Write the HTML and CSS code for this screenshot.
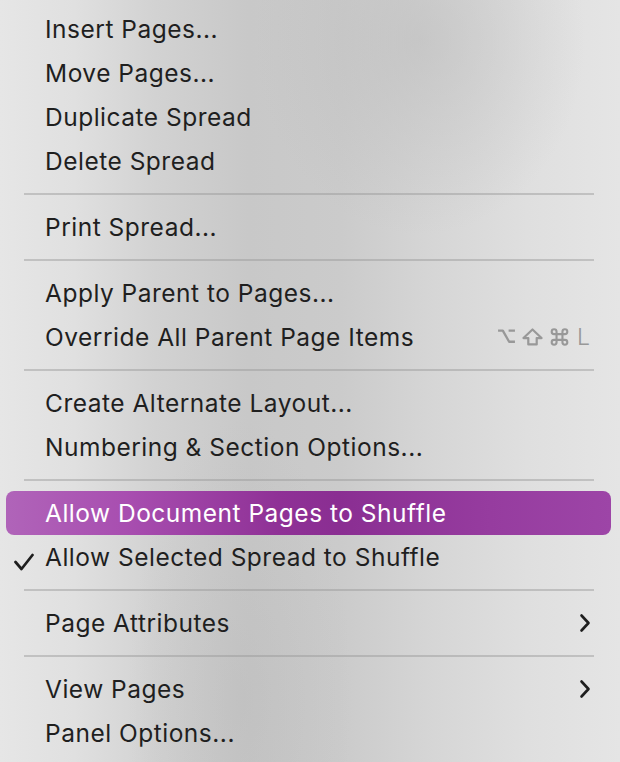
FILE: index.html
```html
<!DOCTYPE html>
<html>
<head>
<meta charset="utf-8">
<link rel="stylesheet" href="styles.css">
</head>
<body>
<div class="menu">
  <div class="item"><span class="label">Insert Pages...</span></div>
  <div class="item"><span class="label">Move Pages...</span></div>
  <div class="item"><span class="label">Duplicate Spread</span></div>
  <div class="item"><span class="label">Delete Spread</span></div>
  <div class="sep"></div>
  <div class="item"><span class="label">Print Spread...</span></div>
  <div class="sep"></div>
  <div class="item"><span class="label">Apply Parent to Pages...</span></div>
  <div class="item"><span class="label">Override All Parent Page Items</span><span class="shortcut"><svg class="k-opt" width="19" height="18" viewBox="0 0 18 17"><path d="M1 2.5 H5.5 L11.5 13 H17 M11 2.5 H17" fill="none" stroke="#989898" stroke-width="2.2" stroke-linejoin="round"/></svg><svg class="k-shift" width="21" height="18" viewBox="0 0 20 17"><path d="M10 1.3 L18.6 9.5 H14 V15.6 H6 V9.5 H1.4 Z" fill="none" stroke="#989898" stroke-width="2.1" stroke-linejoin="round"/></svg><svg class="k-cmd" width="19" height="18" viewBox="0 0 18 17"><path d="M6.2 5.6 V3.5 A2.3 2.3 0 1 0 3.9 5.8 H14.1 A2.3 2.3 0 1 0 11.8 3.5 V13.5 A2.3 2.3 0 1 0 14.1 11.2 H3.9 A2.3 2.3 0 1 0 6.2 13.5 Z" fill="none" stroke="#989898" stroke-width="2" stroke-linejoin="round"/></svg><span class="k-l">L</span></span></div>
  <div class="sep"></div>
  <div class="item"><span class="label">Create Alternate Layout...</span></div>
  <div class="item"><span class="label">Numbering &amp; Section Options...</span></div>
  <div class="sep"></div>
  <div class="item active"><span class="label">Allow Document Pages to Shuffle</span></div>
  <div class="item"><span class="check"><svg width="20" height="18" viewBox="0 0 20 18"><path d="M1.5 9 L7.5 16 L18.5 2" fill="none" stroke="#1e1e1e" stroke-width="2.7" stroke-linecap="round" stroke-linejoin="round"/></svg></span><span class="label">Allow Selected Spread to Shuffle</span></div>
  <div class="sep"></div>
  <div class="item"><span class="label">Page Attributes</span><span class="chev"><svg width="12" height="20" viewBox="0 0 12 20"><path d="M2.5 2.5 L9.5 10 L2.5 17.5" fill="none" stroke="#1e1e1e" stroke-width="2.6" stroke-linecap="round" stroke-linejoin="round"/></svg></span></div>
  <div class="sep"></div>
  <div class="item"><span class="label">View Pages</span><span class="chev"><svg width="12" height="20" viewBox="0 0 12 20"><path d="M2.5 2.5 L9.5 10 L2.5 17.5" fill="none" stroke="#1e1e1e" stroke-width="2.6" stroke-linecap="round" stroke-linejoin="round"/></svg></span></div>
  <div class="item"><span class="label">Panel Options...</span></div>
</div>
</body>
</html>
```

FILE: styles.css
```css
html, body {
  margin: 0;
  padding: 0;
}
body {
  width: 620px;
  height: 762px;
  overflow: hidden;
  font-family: Inter, "Noto Sans", sans-serif;
}
.menu {
  width: 620px;
  height: 762px;
  box-sizing: border-box;
  padding: 7px 0;
  display: flex;
  flex-direction: column;
  background:
    radial-gradient(ellipse 160px 400px at 240px 700px, rgba(180,180,180,0.35), rgba(180,180,180,0) 70%),
    radial-gradient(ellipse 220px 260px at 420px 40px, rgba(185,185,185,0.5), rgba(185,185,185,0) 75%),
    linear-gradient(90deg, #e6e6e6 0%, #e0e0e0 12%, #d2d2d2 25%, #c8c8c8 40%, #cbcbcb 55%, #d6d6d6 70%, #dfdfdf 85%, #e5e5e5 100%);
}
.item {
  position: relative;
  height: 44px;
  flex: none;
  display: flex;
  align-items: center;
  padding: 0 27px 0 45px;
  font-size: 24.5px;
  color: #1f1f1f;
  letter-spacing: 0.5px;
}
.item .label {
  flex: 1;
  white-space: nowrap;
}
.item.active {
  margin: 0 9px 0 6px;
  padding-left: 39px;
  border-radius: 8px;
  color: #ffffff;
  background: linear-gradient(90deg, #b064b9 0%, #a84eb0 20%, #8f3196 45%, #8a2e92 55%, #963c9f 80%, #9d45a7 100%);
}
.check {
  position: absolute;
  left: 14px;
  top: 12px;
  width: 20px;
  height: 18px;
}
.shortcut {
  display: flex;
  align-items: center;
  gap: 5px;
  margin-right: 3px;
}
.shortcut svg {
  display: block;
}
.k-shift {
  margin-left: 1px;
}
.k-cmd {
  margin-left: 2px;
}
.k-l {
  color: #989898;
  font-family: Inter, sans-serif;
  font-weight: 300;
  font-size: 23px;
  letter-spacing: 0;
  margin-left: 3px;
  line-height: 18px;
}
.chev {
  display: flex;
  align-items: center;
  width: 12px;
  height: 20px;
  margin-right: 2px;
}
.sep {
  flex: none;
  height: 22px;
  display: flex;
  align-items: center;
  padding: 0 26px 0 24px;
}
.sep::before {
  content: "";
  display: block;
  flex: 1;
  height: 2px;
  background: rgba(150,150,150,0.45);
}
```
